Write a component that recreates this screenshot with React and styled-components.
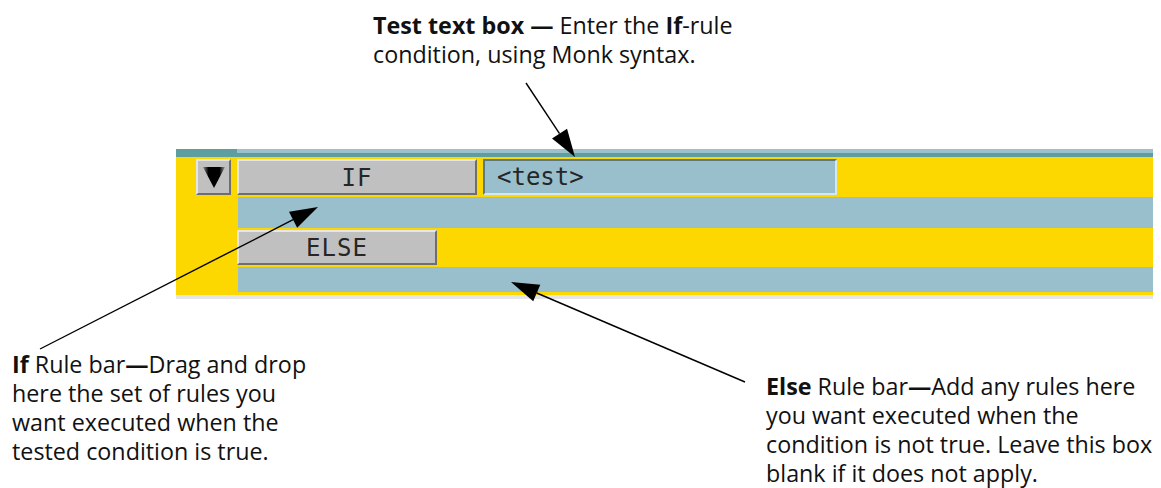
import styled, { createGlobalStyle } from 'styled-components';

const GlobalStyle = createGlobalStyle`
  html, body {
    margin: 0;
    padding: 0;
    background: #fff;
  }
`;

const YELLOW = '#fdd700';
const BLUE = '#99bfcd';
const TEAL = '#5f9e9e';

const Page = styled.div`
  position: relative;
  width: 1161px;
  height: 488px;
  font-family: 'Open Sans', Lato, sans-serif;
  font-size: 23.3px;
  line-height: 29px;
  color: #111;
`;

const Note = styled.p`
  margin: 0;
  white-space: nowrap;

  b {
    font-weight: 700;
  }
`;

const TopNote = styled(Note)`
  margin-left: 373px;
  padding-top: 11px;
`;

const Panel = styled.div`
  margin: 80px 0 0 176px;
  width: 977px;
  display: flex;
  flex-direction: column;
`;

const Header = styled.div`
  display: flex;
  height: 8px;
`;

const HeaderLeft = styled.div`
  width: 61px;
  background: ${TEAL};
`;

const HeaderRest = styled.div`
  flex: 1;
  background: linear-gradient(
    to bottom,
    #9cc1cc 0,
    #9cc1cc 4px,
    ${TEAL} 4px,
    ${TEAL} 8px
  );
`;

const Body = styled.div`
  background: ${YELLOW};
  padding: 2px 0 3px;
  display: flex;
  flex-direction: column;
  gap: 2px;
  border-bottom: 4px solid #e5e5e5;
`;

const Row = styled.div`
  display: flex;
  align-items: center;
  height: ${(p) => p.$h}px;
  padding-left: ${(p) => p.$indent}px;
  gap: ${(p) => p.$gap || 0}px;
`;

const Strip = styled.div`
  height: ${(p) => p.$h}px;
  margin-left: 62px;
  background: ${BLUE};
`;

const Bevel = styled.div`
  box-sizing: border-box;
  background: #c0c0c0;
  border-top: 2px solid #e6e6e6;
  border-left: 2px solid #e6e6e6;
  border-bottom: 2px solid #6e6e6e;
  border-right: 2px solid #6e6e6e;
  display: flex;
  align-items: center;
  justify-content: center;
`;

const Toggle = styled(Bevel)`
  width: 35px;
  height: 36px;
`;

const RuleButton = styled(Bevel)`
  width: ${(p) => p.$w}px;
  height: ${(p) => p.$h}px;
  font-family: 'DejaVu Sans Mono', 'Liberation Mono', monospace;
  font-size: 24px;
  line-height: 1;
  color: #262626;
  letter-spacing: 1px;
  padding-top: 1px;
`;

const TestBox = styled.div`
  box-sizing: border-box;
  width: 354px;
  height: 36px;
  margin-top: -1px;
  background: ${BLUE};
  border-top: 2px solid #5d7880;
  border-left: 2px solid #5d7880;
  border-bottom: 2px solid #d6e6ec;
  border-right: 2px solid #d6e6ec;
  padding-left: 12px;
  display: flex;
  align-items: center;
  font-family: 'DejaVu Sans Mono', 'Liberation Mono', monospace;
  font-size: 24px;
  line-height: 1;
  color: #262626;
`;

const Notes = styled.div`
  display: grid;
  grid-template-columns: 754px 1fr;
  padding-left: 12px;
  margin-top: 51px;
`;

const RightNote = styled(Note)`
  padding-top: 22px;
`;

const Overlay = styled.svg`
  position: absolute;
  left: 0;
  top: 0;
  pointer-events: none;
`;

const arrows = [
  { from: [526, 83], to: [575, 157] },
  { from: [40, 349], to: [318, 207] },
  { from: [745, 382], to: [511, 282] },
];

function Arrow({ from, to }) {
  const [x1, y1] = from;
  const [x2, y2] = to;
  const len = Math.hypot(x2 - x1, y2 - y1);
  const ux = (x2 - x1) / len;
  const uy = (y2 - y1) / len;
  const head = 28;
  const half = 9;
  const bx = x2 - ux * head;
  const by = y2 - uy * head;
  const pts = [
    [x2, y2],
    [bx - uy * half, by + ux * half],
    [bx + uy * half, by - ux * half],
  ]
    .map((p) => p.join(','))
    .join(' ');
  return (
    <g>
      <line x1={x1} y1={y1} x2={bx} y2={by} stroke="#000" strokeWidth="1.4" />
      <polygon points={pts} fill="#000" />
    </g>
  );
}

function DownTriangle() {
  return (
    <svg width="24" height="24" viewBox="0 0 24 24">
      <defs>
        <linearGradient id="tri" x1="0" x2="1" y1="0" y2="0">
          <stop offset="0" stopColor="#8a8a8a" />
          <stop offset="0.25" stopColor="#000" />
          <stop offset="0.75" stopColor="#000" />
          <stop offset="1" stopColor="#9a9a9a" />
        </linearGradient>
      </defs>
      <polygon points="1,2 23,2 12,23" fill="url(#tri)" />
    </svg>
  );
}

export default function App() {
  return (
    <Page>
      <GlobalStyle />
      <TopNote>
        <b>Test text box — </b>Enter the <b>If</b>-rule
        <br />
        condition, using Monk syntax.
      </TopNote>

      <Panel>
        <Header>
          <HeaderLeft />
          <HeaderRest />
        </Header>
        <Body>
          <Row $h={36} $indent={20} $gap={6}>
            <Toggle>
              <DownTriangle />
            </Toggle>
            <RuleButton $w={240} $h={36}>
              IF
            </RuleButton>
            <TestBox>&lt;test&gt;</TestBox>
          </Row>
          <Strip $h={31} />
          <Row $h={35} $indent={61}>
            <RuleButton $w={200} $h={35}>
              ELSE
            </RuleButton>
          </Row>
          <Strip $h={25} />
        </Body>
      </Panel>

      <Notes>
        <Note>
          <b>If</b> Rule bar<b>—</b>Drag and drop
          <br />
          here the set of rules you
          <br />
          want executed when the
          <br />
          tested condition is true.
        </Note>
        <RightNote>
          <b>Else</b> Rule bar<b>—</b>Add any rules here
          <br />
          you want executed when the
          <br />
          condition is not true. Leave this box
          <br />
          blank if it does not apply.
        </RightNote>
      </Notes>

      <Overlay width="1161" height="488">
        {arrows.map((a, i) => (
          <Arrow key={i} {...a} />
        ))}
      </Overlay>
    </Page>
  );
}
